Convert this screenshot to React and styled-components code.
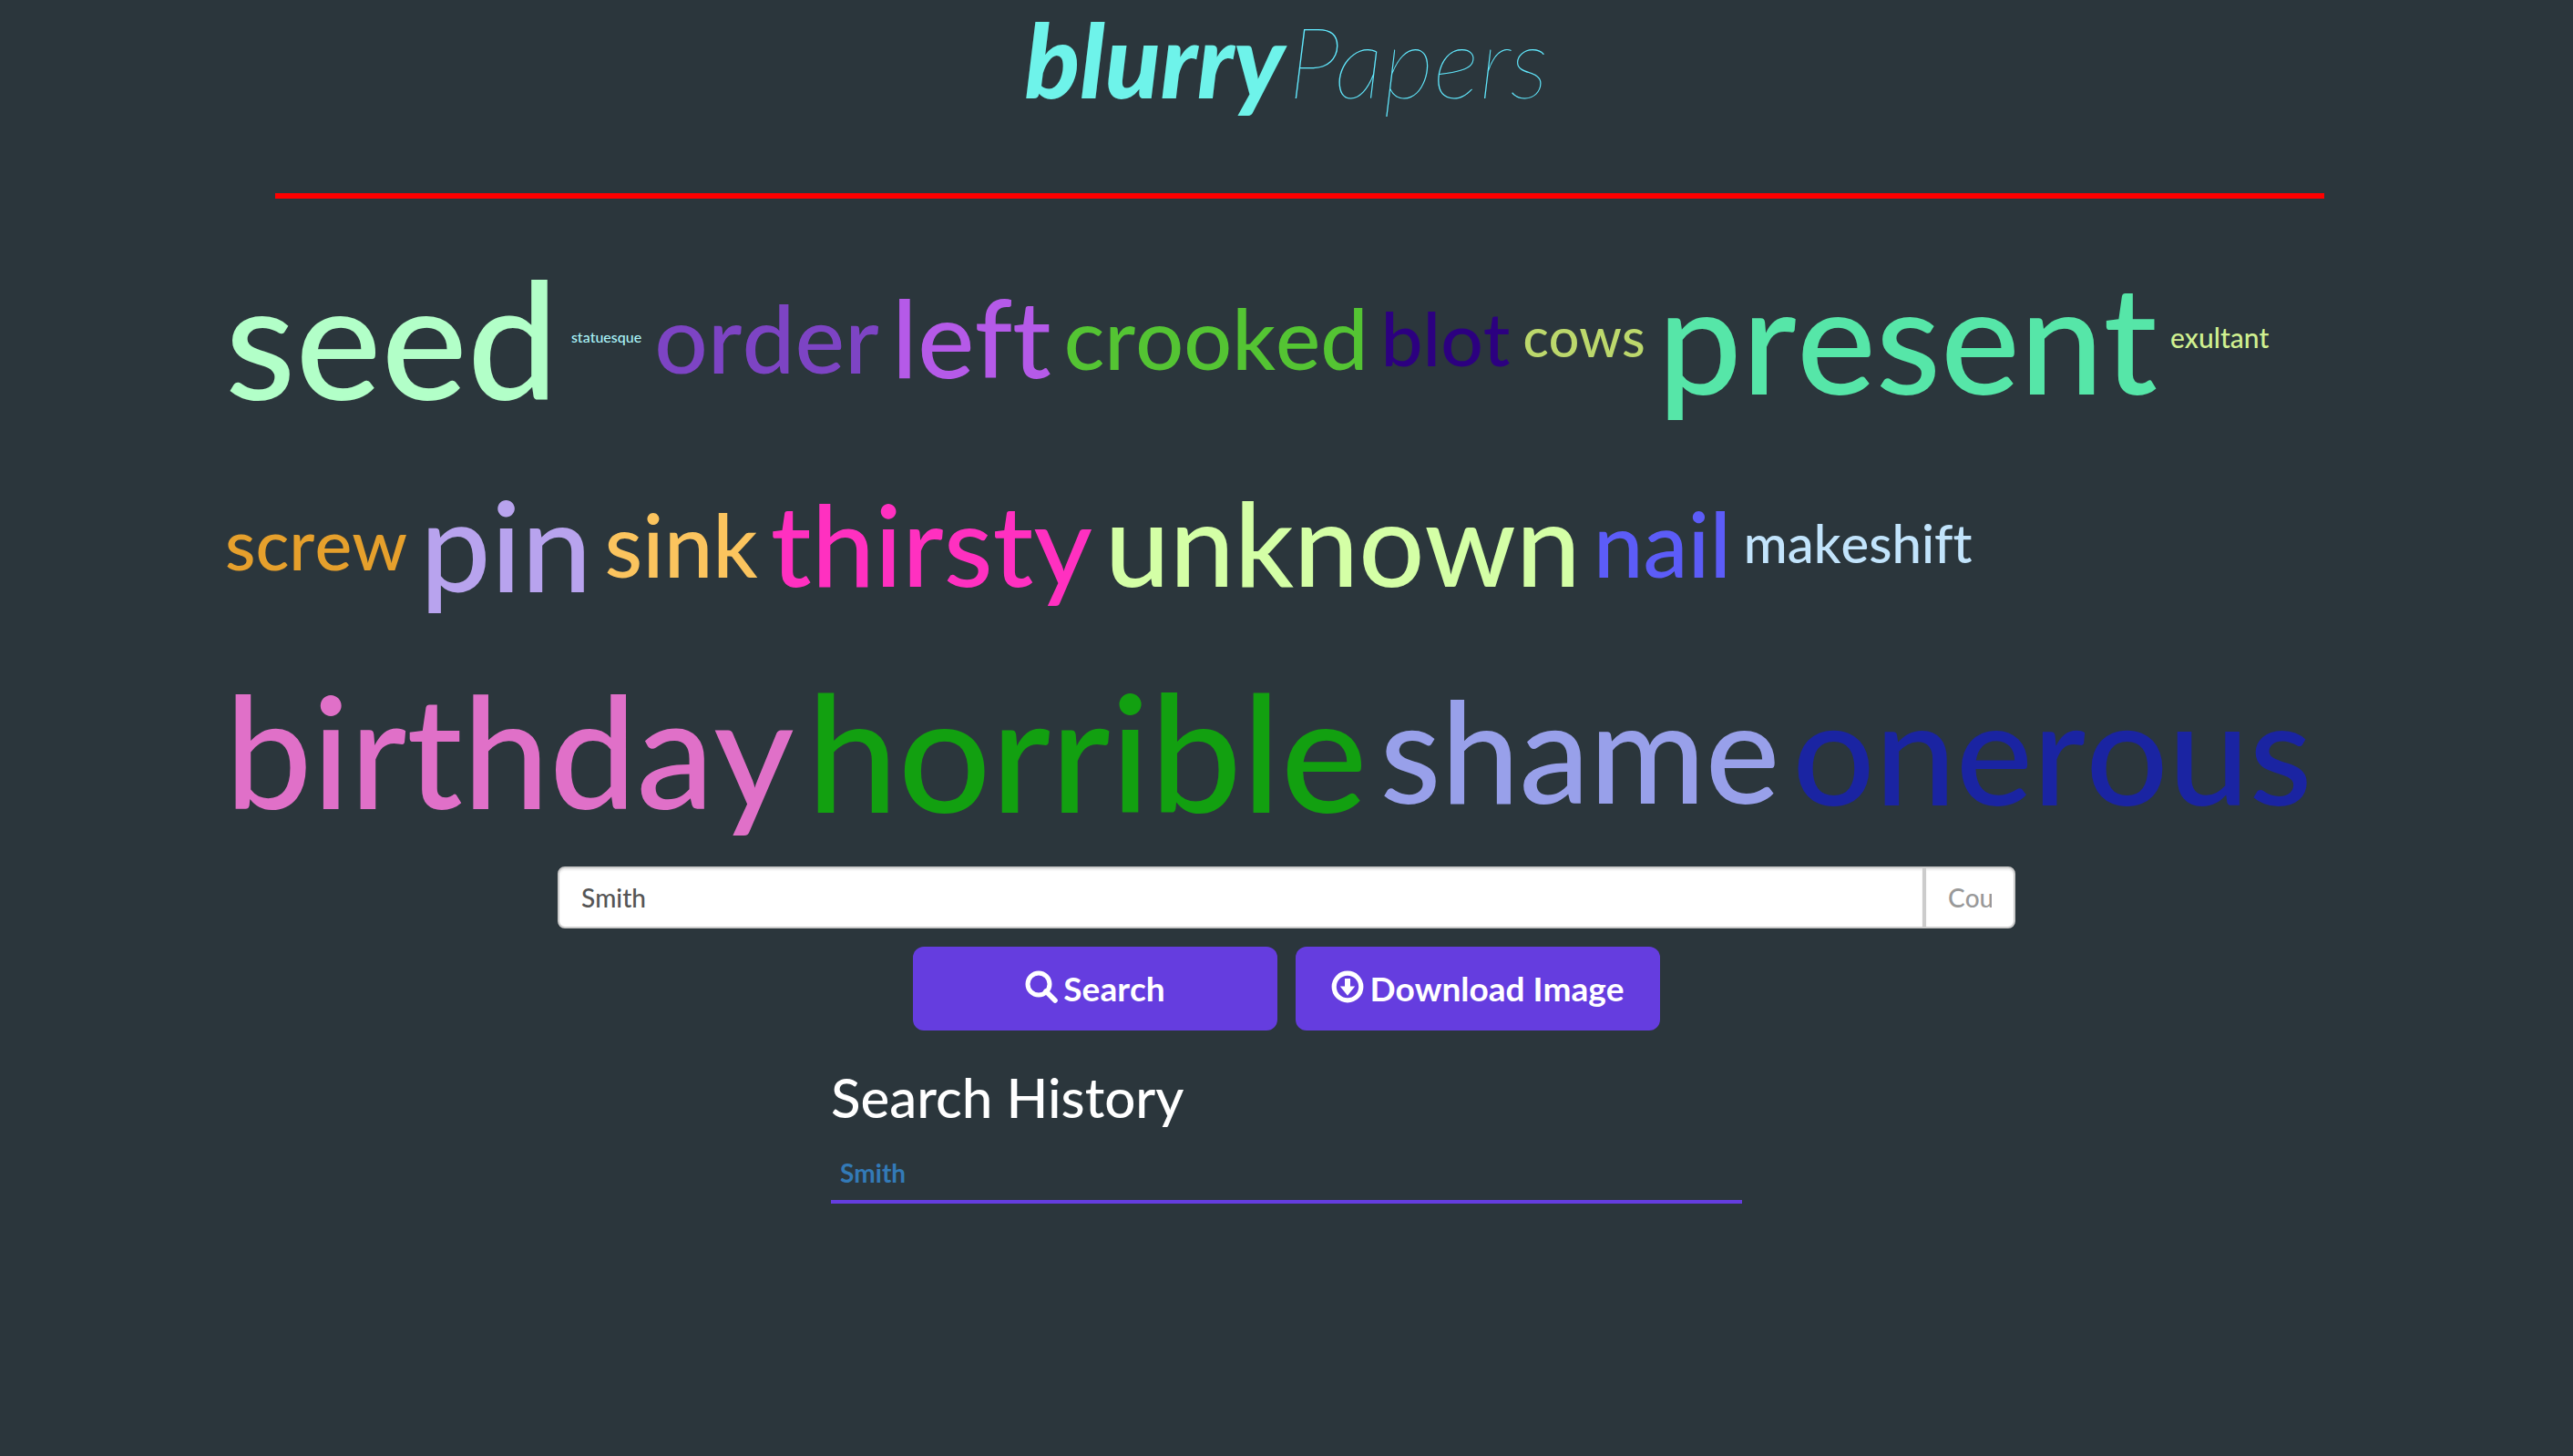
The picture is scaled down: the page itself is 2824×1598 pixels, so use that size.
import React, { useState } from 'react';
import styled, { createGlobalStyle } from 'styled-components';

const GlobalStyle = createGlobalStyle`
  * { box-sizing: border-box; }
  body {
    margin: 0;
    background: #2b363c;
    font-family: Lato, "Open Sans", sans-serif;
    font-size: 28px;
    font-weight: 500;
    line-height: 40px;
    font-variant-ligatures: none;
    font-kerning: none;
    color: #fff;
  }
`;

const Container = styled.main`
  width: calc(100% - 484px);
  max-width: 2340px;
  margin: 0 auto;
`;

const Logo = styled.h1`
  margin: 0;
  padding-top: 3px;
  text-align: center;
  font-size: 112px;
  line-height: 124px;
  font-style: italic;
  font-weight: 900;
  font-kerning: normal;
  color: #6ef3ea;
`;

const LogoThin = styled.span`
  margin-left: 4px;
  font-size: 109px;
  line-height: 1;
  font-weight: 100;
  color: #62eaff;
`;

const Rule = styled.hr`
  margin: 85px 31px 25px 60px;
  border: 0;
  height: 6px;
  background: #f00;
`;

const Cloud = styled.ul`
  display: flex;
  flex-wrap: wrap;
  align-items: center;
  column-gap: 4px;
  margin: 0;
  padding: 0;
  list-style: none;
`;

const Word = styled.li`
  padding: 0 5px;
  font-size: ${(p) => p.$size}px;
  line-height: 1.43;
  color: ${(p) => p.$color};
`;

const Form = styled.form`
  display: flex;
  flex-direction: column;
  align-items: center;
  gap: 20px;
`;

const InputGroup = styled.div`
  display: flex;
  width: 100%;
  max-width: 1600px;
`;

const Input = styled.input`
  height: 68px;
  min-width: 0;
  padding: 12px 24px;
  border: 2px solid #ccc;
  background: #fff;
  box-shadow: inset 0 2px 2px rgba(0, 0, 0, 0.075);
  color: #555;
  font: inherit;
  outline: none;
  &::placeholder { color: #999; opacity: 1; }
`;

const NameInput = styled(Input)`
  flex: 1;
  border-radius: 8px 0 0 8px;
`;

const CountInput = styled(Input)`
  width: 100px;
  border-radius: 0 8px 8px 0;
`;

const Buttons = styled.div`
  display: flex;
  gap: 20px;
`;

const Button = styled.button`
  display: flex;
  align-items: center;
  justify-content: center;
  gap: 6px;
  width: 400px;
  height: 92px;
  border: 0;
  border-radius: 12px;
  background: #653ddf;
  color: #fff;
  font: inherit;
  font-size: 37px;
  line-height: 48px;
  font-weight: 700;
  font-kerning: none;
  cursor: pointer;
`;

const Glyph = styled.svg`
  width: 36px;
  height: 36px;
  margin-bottom: 4px;
  fill: none;
  stroke: currentColor;
`;

const History = styled.section`
  width: 1000px;
  max-width: 100%;
  margin: 40px auto 0;
`;

const HistoryTitle = styled.h2`
  margin: 0 0 20px;
  font-size: 60px;
  line-height: 66px;
  font-weight: 500;
  font-kerning: normal;
`;

const HistoryList = styled.ul`
  margin: 0;
  padding: 0;
  list-style: none;
`;

const HistoryItem = styled.li`
  padding: 10px;
  border-bottom: 4px solid #653ddf;
`;

const HistoryLink = styled.a`
  color: #337ab7;
  font-weight: 700;
  text-decoration: none;
`;

const WORDS = [
  ['seed', 178, '#b2ffc8'],
  ['statuesque', 16, '#aaf3f8'],
  ['order', 103, '#7d44c4'],
  ['left', 118, '#b55ae8'],
  ['crooked', 93, '#54c433'],
  ['blot', 82, '#2c0080'],
  ['cows', 59, '#bcd86c'],
  ['present', 164, '#56e6a8'],
  ['exultant', 30, '#d0f090'],
  ['screw', 77, '#e6a02c'],
  ['pin', 138, '#b8a3ee'],
  ['sink', 96, '#fbc45e'],
  ['thirsty', 124, '#ff30c0'],
  ['unknown', 127, '#d4ffa6'],
  ['nail', 98, '#5c5cf8'],
  ['makeshift', 58, '#c2e4fc'],
  ['birthday', 170, '#e070c8'],
  ['horrible', 179, '#12a010'],
  ['shame', 154, '#98a0ea'],
  ['onerous', 159, '#1a24a2'],
];

export default function App() {
  const [name, setName] = useState('Smith');
  return (
    <>
      <GlobalStyle />
      <Container>
        <Logo>blurry<LogoThin>Papers</LogoThin></Logo>
        <Rule />
        <Cloud>
          {WORDS.map(([text, size, color]) => (
            <Word key={text} $size={size} $color={color}>{text}</Word>
          ))}
        </Cloud>
        <Form onSubmit={(e) => e.preventDefault()}>
          <InputGroup>
            <NameInput aria-label="Name" value={name} onChange={(e) => setName(e.target.value)} />
            <CountInput aria-label="Count" placeholder="Count" />
          </InputGroup>
          <Buttons>
            <Button type="submit">
              <Glyph viewBox="0 0 36 36" aria-hidden="true">
                <circle cx="15" cy="15" r="12" strokeWidth="5" />
                <path d="M23 23 L33 33" strokeWidth="5.6" strokeLinecap="round" />
              </Glyph>
              Search
            </Button>
            <Button type="button">
              <Glyph viewBox="0 0 36 36" aria-hidden="true">
                <circle cx="18" cy="18" r="14.8" strokeWidth="5.2" />
                <path d="M15 9h6v8.6h5.2L18 27.7 9.8 17.6H15z" fill="currentColor" stroke="none" />
              </Glyph>
              Download Image
            </Button>
          </Buttons>
        </Form>
        <History>
          <HistoryTitle>Search History</HistoryTitle>
          <HistoryList>
            <HistoryItem><HistoryLink href="#smith">Smith</HistoryLink></HistoryItem>
          </HistoryList>
        </History>
      </Container>
    </>
  );
}
